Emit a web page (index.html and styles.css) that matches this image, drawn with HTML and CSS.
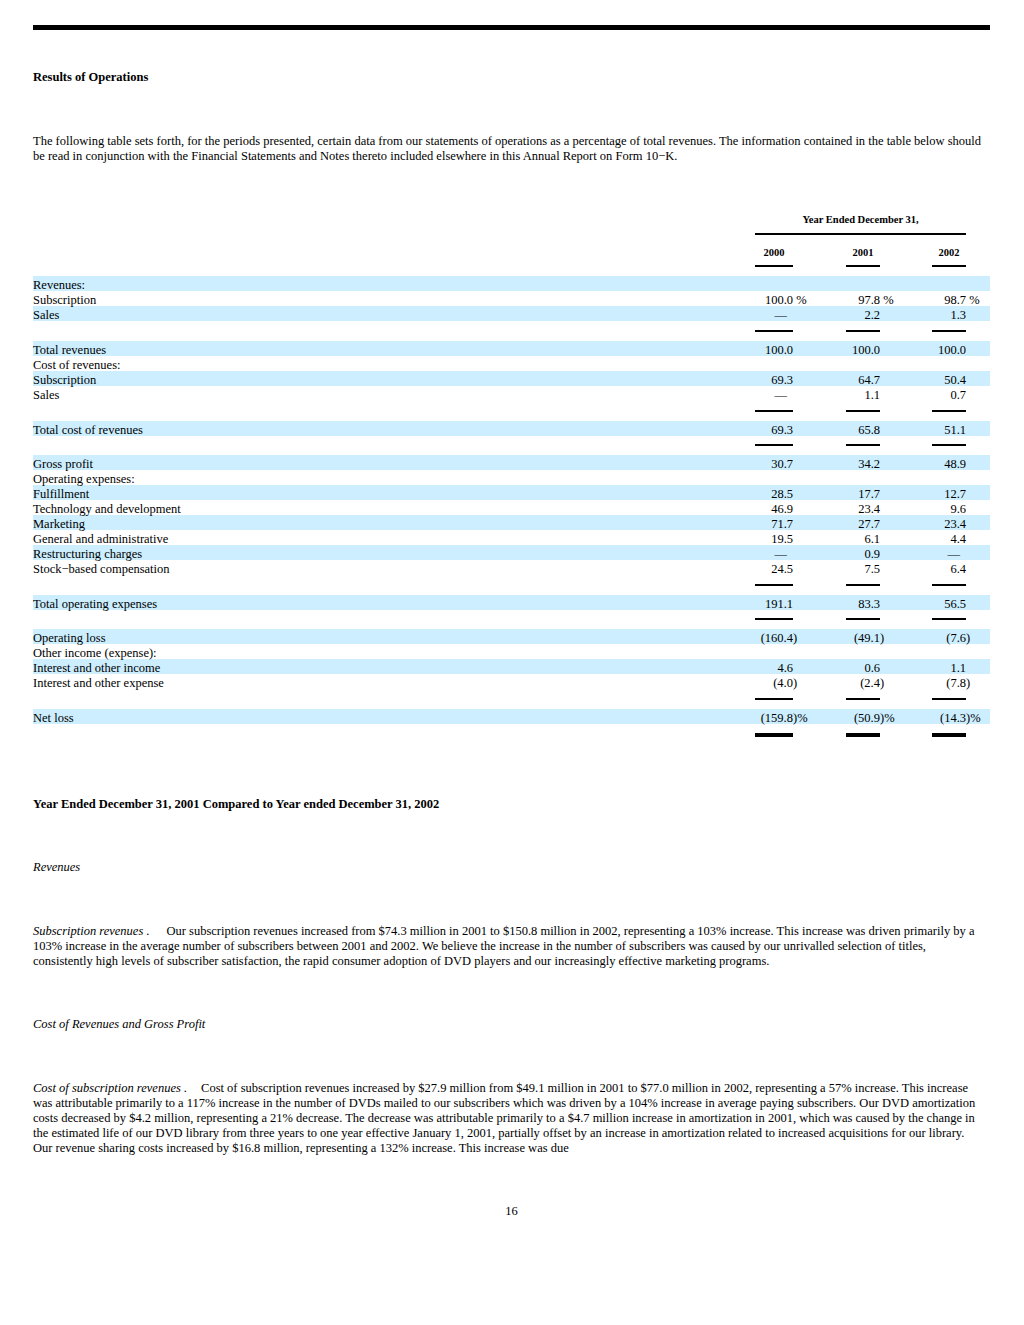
FILE: index.html
```html
<!DOCTYPE html>
<html lang="en">
<head>
<meta charset="utf-8">
<title>Results of Operations</title>
<link rel="stylesheet" href="styles.css">
</head>
<body>
<div class="page">
  <div class="topbar"></div>

  <h2 class="h-bold h-results">Results of Operations</h2>

  <p class="para intro">The following table sets forth, for the periods presented, certain data from our statements of operations as a percentage of total revenues. The information contained in the table below should<br>be read in conjunction with the Financial Statements and Notes thereto included elsewhere in this Annual Report on Form 10&minus;K.</p>

  <table class="ops">
    <colgroup>
      <col class="c-label">
      <col class="c-n0">
      <col class="c-s0">
      <col class="c-n1">
      <col class="c-s1">
      <col class="c-n2">
      <col class="c-s2">
    </colgroup>
    <thead>
      <tr class="hrow1">
        <td></td>
        <td colspan="5" class="cap">Year Ended December 31,</td>
        <td></td>
      </tr>
      <tr class="hrow2">
        <td></td>
        <td class="yr">2000</td><td></td>
        <td class="yr">2001</td><td></td>
        <td class="yr">2002</td><td></td>
      </tr>
      <tr class="gap"><td colspan="7"></td></tr>
    </thead>
    <tbody>
      <tr class="row b"><td>Revenues:</td><td></td><td></td><td></td><td></td><td></td><td></td></tr>
      <tr class="row"><td>Subscription</td><td class="n">100.0</td><td class="s">&nbsp;%</td><td class="n">97.8</td><td class="s">&nbsp;%</td><td class="n">98.7</td><td class="s">&nbsp;%</td></tr>
      <tr class="row b"><td>Sales</td><td class="n d">&mdash;</td><td class="s"></td><td class="n">2.2</td><td class="s"></td><td class="n">1.3</td><td class="s"></td></tr>
      <tr class="rule-row"><td></td><td><div class="rule"></div></td><td></td><td><div class="rule"></div></td><td></td><td><div class="rule"></div></td><td></td></tr>

      <tr class="row b"><td>Total revenues</td><td class="n">100.0</td><td class="s"></td><td class="n">100.0</td><td class="s"></td><td class="n">100.0</td><td class="s"></td></tr>
      <tr class="row"><td>Cost of revenues:</td><td></td><td></td><td></td><td></td><td></td><td></td></tr>
      <tr class="row b"><td>Subscription</td><td class="n">69.3</td><td class="s"></td><td class="n">64.7</td><td class="s"></td><td class="n">50.4</td><td class="s"></td></tr>
      <tr class="row"><td>Sales</td><td class="n d">&mdash;</td><td class="s"></td><td class="n">1.1</td><td class="s"></td><td class="n">0.7</td><td class="s"></td></tr>
      <tr class="rule-row"><td></td><td><div class="rule"></div></td><td></td><td><div class="rule"></div></td><td></td><td><div class="rule"></div></td><td></td></tr>

      <tr class="row b"><td>Total cost of revenues</td><td class="n">69.3</td><td class="s"></td><td class="n">65.8</td><td class="s"></td><td class="n">51.1</td><td class="s"></td></tr>
      <tr class="rule-row short"><td></td><td><div class="rule"></div></td><td></td><td><div class="rule"></div></td><td></td><td><div class="rule"></div></td><td></td></tr>

      <tr class="row b"><td>Gross profit</td><td class="n">30.7</td><td class="s"></td><td class="n">34.2</td><td class="s"></td><td class="n">48.9</td><td class="s"></td></tr>
      <tr class="row"><td>Operating expenses:</td><td></td><td></td><td></td><td></td><td></td><td></td></tr>
      <tr class="row b"><td>Fulfillment</td><td class="n">28.5</td><td class="s"></td><td class="n">17.7</td><td class="s"></td><td class="n">12.7</td><td class="s"></td></tr>
      <tr class="row"><td>Technology and development</td><td class="n">46.9</td><td class="s"></td><td class="n">23.4</td><td class="s"></td><td class="n">9.6</td><td class="s"></td></tr>
      <tr class="row b"><td>Marketing</td><td class="n">71.7</td><td class="s"></td><td class="n">27.7</td><td class="s"></td><td class="n">23.4</td><td class="s"></td></tr>
      <tr class="row"><td>General and administrative</td><td class="n">19.5</td><td class="s"></td><td class="n">6.1</td><td class="s"></td><td class="n">4.4</td><td class="s"></td></tr>
      <tr class="row b"><td>Restructuring charges</td><td class="n d">&mdash;</td><td class="s"></td><td class="n">0.9</td><td class="s"></td><td class="n d">&mdash;</td><td class="s"></td></tr>
      <tr class="row"><td>Stock&minus;based compensation</td><td class="n">24.5</td><td class="s"></td><td class="n">7.5</td><td class="s"></td><td class="n">6.4</td><td class="s"></td></tr>
      <tr class="rule-row"><td></td><td><div class="rule"></div></td><td></td><td><div class="rule"></div></td><td></td><td><div class="rule"></div></td><td></td></tr>

      <tr class="row b"><td>Total operating expenses</td><td class="n">191.1</td><td class="s"></td><td class="n">83.3</td><td class="s"></td><td class="n">56.5</td><td class="s"></td></tr>
      <tr class="rule-row short"><td></td><td><div class="rule"></div></td><td></td><td><div class="rule"></div></td><td></td><td><div class="rule"></div></td><td></td></tr>

      <tr class="row b"><td>Operating loss</td><td class="n">(160.4</td><td class="s">)</td><td class="n">(49.1</td><td class="s">)</td><td class="n">(7.6</td><td class="s">)</td></tr>
      <tr class="row"><td>Other income (expense):</td><td></td><td></td><td></td><td></td><td></td><td></td></tr>
      <tr class="row b"><td>Interest and other income</td><td class="n">4.6</td><td class="s"></td><td class="n">0.6</td><td class="s"></td><td class="n">1.1</td><td class="s"></td></tr>
      <tr class="row"><td>Interest and other expense</td><td class="n">(4.0</td><td class="s">)</td><td class="n">(2.4</td><td class="s">)</td><td class="n">(7.8</td><td class="s">)</td></tr>
      <tr class="rule-row"><td></td><td><div class="rule"></div></td><td></td><td><div class="rule"></div></td><td></td><td><div class="rule"></div></td><td></td></tr>

      <tr class="row b"><td>Net loss</td><td class="n">(159.8</td><td class="s">)%</td><td class="n">(50.9</td><td class="s">)%</td><td class="n">(14.3</td><td class="s">)%</td></tr>
      <tr class="rule-row final"><td></td><td><div class="rule thick"></div></td><td></td><td><div class="rule thick"></div></td><td></td><td><div class="rule thick"></div></td><td></td></tr>
    </tbody>
  </table>

  <h3 class="h-bold h-compare">Year Ended December 31, 2001 Compared to Year ended December 31, 2002</h3>

  <p class="para sub-h"><em>Revenues</em></p>

  <p class="para block"><em>Subscription revenues .</em><span class="lead-gap wide"></span>Our subscription revenues increased from $74.3 million in 2001 to $150.8 million in 2002, representing a 103% increase. This increase was driven primarily by a<br>103% increase in the average number of subscribers between 2001 and 2002. We believe the increase in the number of subscribers was caused by our unrivalled selection of titles,<br>consistently high levels of subscriber satisfaction, the rapid consumer adoption of DVD players and our increasingly effective marketing programs.</p>

  <p class="para sub-h"><em>Cost of Revenues and Gross Profit</em></p>

  <p class="para block"><em>Cost of subscription revenues .</em><span class="lead-gap"></span>Cost of subscription revenues increased by $27.9 million from $49.1 million in 2001 to $77.0 million in 2002, representing a 57% increase. This increase<br>was attributable primarily to a 117% increase in the number of DVDs mailed to our subscribers which was driven by a 104% increase in average paying subscribers. Our DVD amortization<br>costs decreased by $4.2 million, representing a 21% decrease. The decrease was attributable primarily to a $4.7 million increase in amortization in 2001, which was caused by the change in<br>the estimated life of our DVD library from three years to one year effective January 1, 2001, partially offset by an increase in amortization related to increased acquisitions for our library.<br>Our revenue sharing costs increased by $16.8 million, representing a 132% increase. This increase was due</p>

  <p class="para page-num">16</p>
</div>
</body>
</html>
```

FILE: styles.css
```css
* {
  box-sizing: border-box;
}

html, body {
  margin: 0;
  padding: 0;
  background: #ffffff;
}

body {
  color: #000000;
  font-family: "Liberation Serif", "Times New Roman", Times, serif;
  font-size: 12.5px;
  line-height: 15px;
  height: 1325px;
}

.page {
  width: 957px;
  margin-left: 33px;
  padding-top: 25px;
}

.topbar {
  height: 5px;
  background: #000000;
}

.h-bold {
  font-weight: bold;
  font-size: 12.5px;
  line-height: 15px;
  margin: 0;
}

.h-results {
  margin-top: 40px;
}

.para {
  margin: 0;
}

.intro {
  margin-top: 49px;
}

/* ---------- table ---------- */
.ops {
  margin-top: 41px;
  width: 957px;
  table-layout: fixed;
  border-collapse: separate;
  border-spacing: 0;
}

.c-label { width: 722px; }
.c-n0 { width: 38px; }
.c-s0 { width: 53px; }
.c-n1 { width: 34px; }
.c-s1 { width: 52px; }
.c-n2 { width: 34px; }
.c-s2 { width: 24px; }

.ops td {
  padding: 0;
  vertical-align: top;
  white-space: nowrap;
}

.hrow1 .cap {
  padding: 8px 0 7px;
  font-size: 10.5px;
  line-height: 13px;
  font-weight: bold;
  text-align: center;
  border-bottom: 2px solid #000000;
}

.hrow2 .yr {
  padding: 11px 0 6px;
  font-size: 10.5px;
  line-height: 13px;
  font-weight: bold;
  text-align: center;
  border-bottom: 2px solid #000000;
}

.gap td {
  height: 9px;
}

.row td {
  height: 15px;
  padding-top: 3px;
  line-height: 12px;
}

.row.b td {
  background: #cceeff;
}

.row td.n {
  text-align: right;
}

.row td.n.d {
  padding-right: 6px;
}

.row td.s {
  text-align: left;
}

.rule-row td {
  height: 20px;
}

.rule-row.short td {
  height: 19px;
}

.rule-row.final td {
  height: 14px;
}

.rule {
  margin-top: 9px;
  height: 2px;
  background: #000000;
}

.rule-row.short .rule {
  margin-top: 8px;
}

.rule.thick {
  margin-top: 9px;
  height: 4px;
}

/* ---------- narrative ---------- */
.h-compare {
  margin-top: 59px;
}

.sub-h {
  margin-top: 48px;
}

.block {
  margin-top: 49px;
}

.lead-gap {
  display: inline-block;
  width: 14px;
}

.lead-gap.wide {
  width: 17px;
}

.page-num {
  margin-top: 48px;
  text-align: center;
}
```
